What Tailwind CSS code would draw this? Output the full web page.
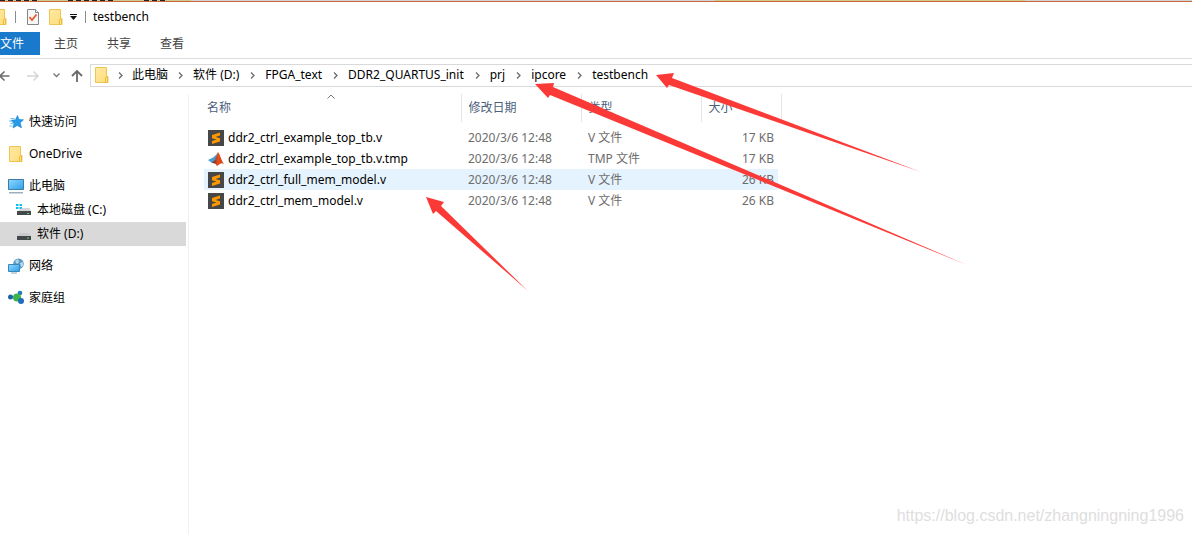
<!DOCTYPE html>
<html lang="zh-CN">
<head>
<meta charset="utf-8">
<meta name="viewport" content="width=device-width, initial-scale=1">
<title>testbench</title>
<script src="https://cdn.jsdelivr.net/npm/@tailwindcss/browser@4"></script>
</head>
<body class="relative flex min-h-screen flex-col overflow-x-hidden bg-white font-['Noto_Sans','Noto_Sans_CJK_SC',sans-serif] text-[12px] leading-4 text-black">
<svg class="absolute size-0" aria-hidden="true">
  <defs>
    <linearGradient id="fold" x2="1" y2="1"><stop stop-color="#ffe9a2"/><stop offset="1" stop-color="#ffdc7c"/></linearGradient>
    <linearGradient id="screen" x2="1" y2="1"><stop stop-color="#8fd8ff"/><stop offset="1" stop-color="#2f9fea"/></linearGradient>
    <linearGradient id="peak" x2="1"><stop stop-color="#5a1c18"/><stop offset=".5" stop-color="#e8501c"/><stop offset="1" stop-color="#c23a12"/></linearGradient>
    <symbol id="folder" viewBox="0 0 14 16"><path d="M.5.5h11v9h1.500v6H.5z" fill="url(#fold)" stroke="#ecc650"/><path d="M10.500 15.500v-5l2-1v6z" fill="#ffe28a" stroke="#e8bd3e"/></symbol>
    <symbol id="chev" viewBox="0 0 5 7"><path d="M1 .5l3 3-3 3" fill="none" stroke="#6b6b6b" stroke-width="1.300"/></symbol>
    <symbol id="subl" viewBox="0 0 16 16"><path d="M0 0h16v16H0z" fill="#474747"/><path d="M12 2.500v3L7.500 7l4.500 1.300v3.200L4 14v-3l4.500-1.500L4 8.200V5z" fill="#ff9800"/></symbol>
  </defs>
</svg>

<div class="flex h-px bg-[linear-gradient(90deg,#cfc88f_0_16%,#d3d3d3_16%_60%,#d2ca86_60%_86%,#d3d3d3_86%)]">
  <span class="w-10 bg-[repeating-linear-gradient(90deg,#222_0_5px,#cfc88f_5px_8px)]"></span>
  <span class="ml-7 w-12 bg-[repeating-linear-gradient(90deg,#222_0_5px,#cfc88f_5px_8px)]"></span>
  <span class="ml-7 w-6 bg-[repeating-linear-gradient(90deg,#222_0_5px,#cfc88f_5px_8px)]"></span>
</div>
<div class="h-px bg-[#c8683f]"></div>

<header>
  <div class="flex h-[30px] items-center">
    <svg class="-ml-[7px] h-4 w-[14px] shrink-0"><use href="#folder"/></svg>
    <span class="ml-2 h-3 w-px bg-[#8c8c8c]"></span>
    <button class="ml-[11px]" aria-label="属性"><svg class="block h-4 w-3" viewBox="0 0 12 16"><path d="M.5.5h8l3 3v12H.5z" fill="#f6f6f6" stroke="#858585"/><path d="M8.500.5v3h3" fill="#fff" stroke="#858585"/><path d="M2.500 8l2.500 3 4.500-5.500" fill="none" stroke="#e8592b" stroke-width="1.800"/></svg></button>
    <button class="ml-[10px]" aria-label="新建文件夹"><svg class="block h-4 w-[14px]"><use href="#folder"/></svg></button>
    <button class="ml-[7px]" aria-label="自定义快速访问工具栏"><svg class="block h-[6px] w-[7px]" viewBox="0 0 7 6"><path d="M0 0h7v1H0zM0 2h7L3.500 6z" fill="#111"/></svg></button>
    <span class="ml-2 h-3 w-px bg-[#8c8c8c]"></span>
    <h1 class="ml-[7px]">testbench</h1>
  </div>
  <nav class="flex h-[27px] border-b border-[#dcdcdc] pb-[3px] text-[#444]" aria-label="功能区">
    <button class="w-10 bg-[#1979ca] pr-4 text-right text-white">文件</button>
    <button class="ml-[14px]">主页</button>
    <button class="ml-[29px]">共享</button>
    <button class="ml-[29px]">查看</button>
  </nav>
  <div class="mt-[5px] flex h-[23px] items-center">
    <button class="-ml-px" aria-label="后退"><svg class="block h-3 w-[11px]" viewBox="0 0 11 12"><path d="M10.500 6H1M5.500 1.500L1 6l4.500 4.500" fill="none" stroke="#6e6e6e" stroke-width="1.600"/></svg></button>
    <button class="ml-[17px]" aria-label="前进"><svg class="block h-3 w-3" viewBox="0 0 12 12"><path d="M0 6h11M6.500 1.500L11 6l-4.500 4.500" fill="none" stroke="#d5d5d5" stroke-width="1.500"/></svg></button>
    <button class="ml-[14px]" aria-label="最近位置"><svg class="block h-[5px] w-[7px]" viewBox="0 0 7 5"><path d="M.5.5l3 3 3-3" fill="none" stroke="#777" stroke-width="1.300"/></svg></button>
    <button class="ml-[11px]" aria-label="上移"><svg class="block h-3 w-3" viewBox="0 0 12 12"><path d="M6 12V1M1 6l5-5 5 5" fill="none" stroke="#6a6a6a" stroke-width="1.800"/></svg></button>
    <div class="ml-[7px] flex h-[23px] flex-1 items-center border-y border-l border-[#d9d9d9] pb-px pl-1 whitespace-nowrap">
      <svg class="h-4 w-[14px]"><use href="#folder"/></svg>
      <ol class="flex items-center">
        <li class="flex items-center"><svg class="mx-[9px] h-[7px] w-[5px]"><use href="#chev"/></svg><a href="#">此电脑</a></li>
        <li class="flex items-center"><svg class="mx-[10px] h-[7px] w-[5px]"><use href="#chev"/></svg><a href="#">软件 (D:)</a></li>
        <li class="flex items-center"><svg class="mr-[10px] ml-[11px] h-[7px] w-[5px]"><use href="#chev"/></svg><a href="#">FPGA_text</a></li>
        <li class="flex items-center"><svg class="mr-[10px] ml-[11px] h-[7px] w-[5px]"><use href="#chev"/></svg><a href="#">DDR2_QUARTUS_init</a></li>
        <li class="flex items-center"><svg class="mr-[10px] ml-[11px] h-[7px] w-[5px]"><use href="#chev"/></svg><a href="#">prj</a></li>
        <li class="flex items-center"><svg class="mr-[10px] ml-[11px] h-[7px] w-[5px]"><use href="#chev"/></svg><a href="#">ipcore</a></li>
        <li class="flex items-center"><svg class="mr-[10px] ml-[11px] h-[7px] w-[5px]"><use href="#chev"/></svg><a href="#">testbench</a></li>
      </ol>
    </div>
  </div>
</header>

<div class="mt-[7px] flex flex-1">
  <nav class="flex w-[189px] shrink-0 flex-col border-r border-[#f0f0f0] pt-4 pr-[2px]" aria-label="导航窗格">
    <a href="#" class="flex h-6 items-center gap-[5px] pl-2"><svg class="size-4" viewBox="0 0 16 16"><path d="M9.500 1.500l1.500 4 4.500.3-3.300 3 1.300 5-4.300-2.300L5 14l1-4.500L3 6.300l4.500-.5z" fill="#259bea" stroke="#1682cf" stroke-width=".6"/><path d="M2.500 4.500h4M1 7h3M2.500 9.500h3M1.500 12h3" stroke="#6cbdf0"/></svg>快速访问</a>
    <a href="#" class="mt-2 flex h-6 items-center gap-[5px] pl-2"><span class="flex w-4 justify-center"><svg class="h-4 w-[14px]"><use href="#folder"/></svg></span>OneDrive</a>
    <a href="#" class="mt-2 flex h-6 items-center gap-[5px] pl-2"><svg class="size-4" viewBox="0 0 16 16"><path d="M.5 1.500h15v10H.5z" fill="url(#screen)" stroke="#3b7ca8"/><path d="M1 14h14v1.500H1z" fill="#9fb0bc"/></svg>此电脑</a>
    <a href="#" class="flex h-6 items-center gap-[5px] pl-4"><svg class="size-4" viewBox="0 0 16 16"><path d="M0 2h2.500v2H0zM3.500 2H6v2H3.500zM0 5h2.500v2H0zM3.500 5H6v2H3.500z" fill="#10bdf2"/><path d="M7 6h6.500L15 9H2l1.500-1.500z" fill="#d3d5d8"/><path d="M1 9h14v4H1z" fill="#45484b"/><path d="M11 11h2v1h-2z" fill="#4be05a"/></svg>本地磁盘 (C:)</a>
    <a href="#" class="flex h-6 items-center gap-[5px] bg-[#d9d9d9] pl-4" aria-current="true"><svg class="size-4" viewBox="0 0 16 16"><path d="M3.500 7h9L15 10H1z" fill="#c9cbce"/><path d="M1 10h14v4H1z" fill="#45484b"/><path d="M11 11.500h2v1h-2z" fill="#4be05a"/></svg>软件 (D:)</a>
    <a href="#" class="mt-2 flex h-6 items-center gap-[5px] pl-2"><svg class="size-4" viewBox="0 0 16 16"><circle cx="10.500" cy="5.800" r="5.300" fill="#5b9cc4"/><path d="M7 3l3-2 1 3-2 2zM12 5l3-1v4l-2 1z" fill="#b5d9ea"/><path d="M.5 6.500h11v7H.5z" fill="url(#screen)" stroke="#3b86b8"/><path d="M3 15h6" stroke="#8fa5b3"/></svg>网络</a>
    <a href="#" class="mt-2 flex h-6 items-center gap-[5px] pl-2"><svg class="size-4" viewBox="0 0 16 16"><circle cx="2.500" cy="7" r="2.500" fill="#1c62ad"/><circle cx="12" cy="3" r="2.300" fill="#2678b8"/><circle cx="9" cy="7.500" r="4" fill="#3cb44a"/><circle cx="13" cy="11" r="3" fill="#1f6cba"/></svg>家庭组</a>
  </nav>

  <main class="min-w-0 flex-1 pl-[15px]">
    <table class="w-[577px] table-fixed border-collapse text-[#6d6d6d]">
      <colgroup><col class="w-[257px]"><col class="w-[120px]"><col class="w-[120px]"><col class="w-[80px]"></colgroup>
      <thead class="text-left text-[#4c607a]">
        <tr class="h-7">
          <th class="relative border-r border-[#e5e5e5] pl-[3px] font-normal"><button>名称</button><svg class="absolute top-0 left-[123px] h-[5px] w-2" viewBox="0 0 8 5"><path d="M.5 4.500L4 1l3.500 3.500" fill="none" stroke="#777"/></svg></th>
          <th class="border-r border-[#e5e5e5] pl-[7px] font-normal"><button>修改日期</button></th>
          <th class="border-r border-[#e5e5e5] pl-[7px] font-normal"><button>类型</button></th>
          <th class="border-r border-[#e5e5e5] pl-[7px] font-normal"><button>大小</button></th>
        </tr>
      </thead>
      <tbody>
        <tr class="h-[5px]"><td colspan="4"></td></tr>
        <tr class="h-[21px]"><td class="text-black"><div class="flex items-center gap-1 pl-1"><svg class="size-4"><use href="#subl"/></svg>ddr2_ctrl_example_top_tb.v</div></td><td class="pl-[7px]">2020/3/6 12:48</td><td class="pl-[7px]">V 文件</td><td class="pr-[7px] text-right">17 KB</td></tr>
        <tr class="h-[21px]"><td class="text-black"><div class="flex items-center gap-1 pl-1"><svg class="size-4" viewBox="0 0 16 16"><path d="M0 9l5-2.500L8 4l2-3-3 10-3 1z" fill="#4a9bd0"/><path d="M4 12l3-3 3-8c2 2 3 8 6 12-3-2-4 0-7 2-1-2-2-3-5-3z" fill="url(#peak)"/></svg>ddr2_ctrl_example_top_tb.v.tmp</div></td><td class="pl-[7px]">2020/3/6 12:48</td><td class="pl-[7px]">TMP 文件</td><td class="pr-[7px] text-right">17 KB</td></tr>
        <tr class="h-[21px] bg-[linear-gradient(90deg,#e5f3ff_574px,transparent_574px)]"><td class="text-black"><div class="flex items-center gap-1 pl-1"><svg class="size-4"><use href="#subl"/></svg>ddr2_ctrl_full_mem_model.v</div></td><td class="pl-[7px]">2020/3/6 12:48</td><td class="pl-[7px]">V 文件</td><td class="pr-[7px] text-right">26 KB</td></tr>
        <tr class="h-[21px]"><td class="text-black"><div class="flex items-center gap-1 pl-1"><svg class="size-4"><use href="#subl"/></svg>ddr2_ctrl_mem_model.v</div></td><td class="pl-[7px]">2020/3/6 12:48</td><td class="pl-[7px]">V 文件</td><td class="pr-[7px] text-right">26 KB</td></tr>
      </tbody>
    </table>
  </main>
</div>

<svg class="pointer-events-none absolute top-0 left-0 h-[534px] w-[1192px]" viewBox="0 0 1192 534" fill="#fb3a38" aria-hidden="true">
  <path d="M656 75L674 73 672 78 921 172 669 85 667 88z"/>
  <path d="M535 84L554 83 553 87 967 265 550 95 548 98z"/>
  <path d="M426 197L444 202 441 206 528 291 436 211 433 214z"/>
</svg>
<p class="absolute right-2 bottom-2 font-['Liberation_Sans',sans-serif] text-[16px] leading-5 text-[#dedede]">https://blog.csdn.net/zhangningning1996</p>
</body>
</html>
